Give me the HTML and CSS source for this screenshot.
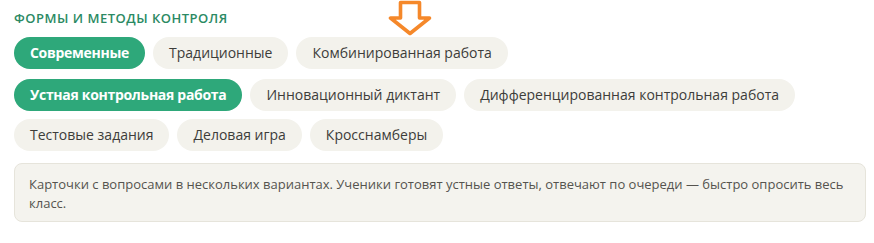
FILE: index.html
```html
<!DOCTYPE html>
<html lang="ru">
  <head>
    <meta charset="UTF-8" />
    <meta name="viewport" content="width=device-width, initial-scale=1.0" />
    <title>Формы и методы контроля</title>
    <link rel="stylesheet" href="styles.css">
  </head>

  <body>
    <section class="control">
      <h3 class="control-title">Формы и методы контроля</h3>

      <div class="chips chips-forms">
        <button class="chip active">Современные</button>
        <button class="chip">Традиционные</button>
        <button class="chip">Комбинированная работа</button>
      </div>

      <div class="chips chips-methods">
        <button class="chip active">Устная контрольная работа</button>
        <button class="chip">Инновационный диктант</button>
        <button class="chip">Дифференцированная контрольная работа</button>
        <button class="chip">Тестовые задания</button>
        <button class="chip">Деловая игра</button>
        <button class="chip">Кросснамберы</button>
      </div>

      <div class="note">
        Карточки с вопросами в нескольких вариантах. Ученики готовят устные
        ответы, отвечают по очереди — быстро опросить весь класс.
      </div>

      <svg class="hint-arrow" width="46" height="36" viewBox="0 0 46 36">
        <path d="M12.5 2.5 H31.5 V18 H41.5 L22 33.5 L2.5 18 H12.5 Z"
              fill="none" stroke="#f5882a" stroke-width="3.6" stroke-linejoin="round" />
      </svg>
    </section>
  </body>
</html>
```

FILE: styles.css
```css
body {
  margin: 0;
  background-color: #ffffff;
  font-family: "Open Sans", "Noto Sans", sans-serif;
  color: #3d3d3a;
}

.control {
  position: relative;
  padding: 10px 8px 0 14px;
}

.control-title {
  margin: 0 0 10px;
  font-size: 13px;
  font-weight: 600;
  letter-spacing: 0.5px;
  text-transform: uppercase;
  color: #2b8a63;
  line-height: 17px;
}

.chips {
  display: flex;
  flex-wrap: wrap;
  gap: 8px;
}

.chips-forms {
  margin-bottom: 10px;
}

.chip {
  font-family: inherit;
  font-size: 14px;
  line-height: 32px;
  height: 32px;
  padding: 0 16px;
  border: none;
  border-radius: 16px;
  background-color: #f3f2ec;
  color: #3d3d3a;
  cursor: pointer;
}

.chip.active {
  background-color: #2ea87a;
  color: #ffffff;
  font-weight: 700;
  letter-spacing: -0.3px;
}

.note {
  margin-top: 12px;
  padding: 11px 14px 8px;
  background-color: #f4f3ee;
  border: 1px solid #e6e4db;
  border-radius: 8px;
  font-size: 13px;
  line-height: 19px;
  color: #55534e;
}

.hint-arrow {
  position: absolute;
  left: 388px;
  top: 0;
}
```
